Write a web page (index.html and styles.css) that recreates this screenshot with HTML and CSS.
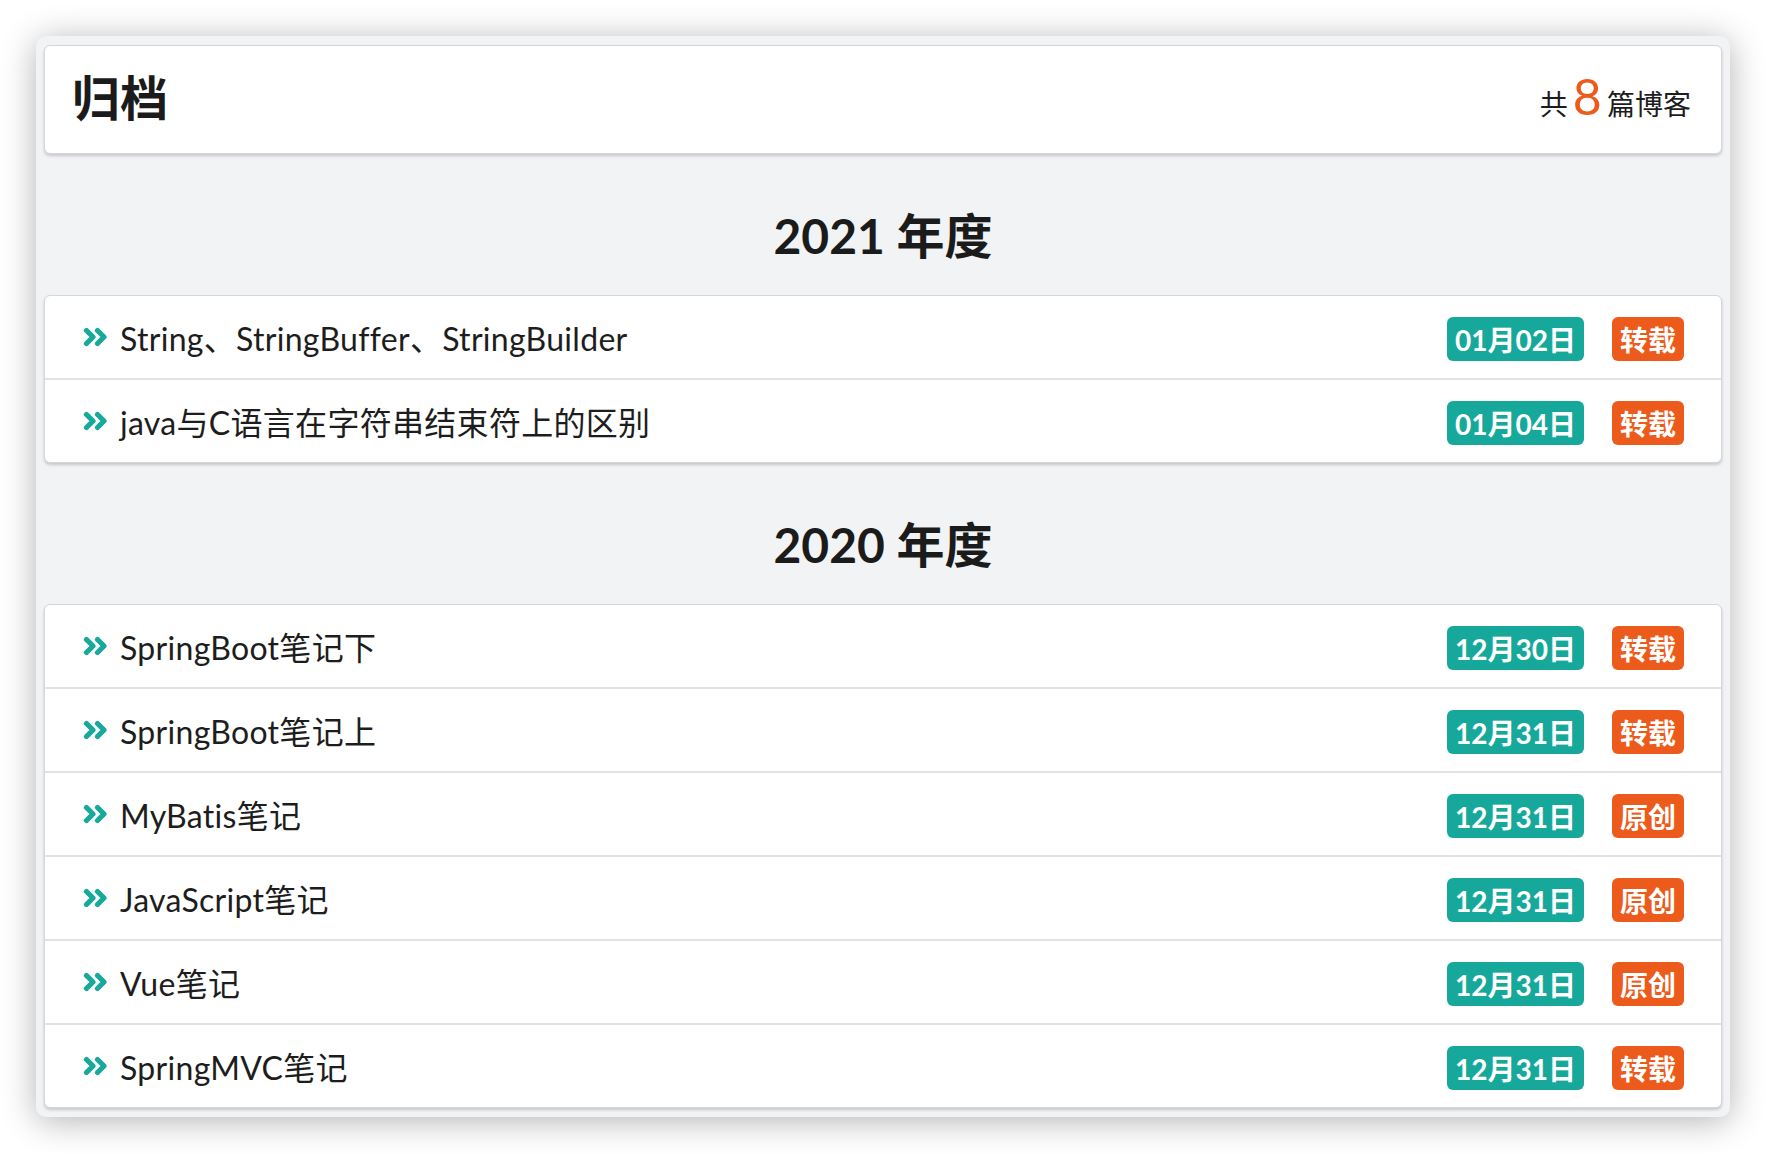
FILE: index.html
```html
<!DOCTYPE html>
<html lang="zh-CN">
<head>
<meta charset="utf-8">
<title>归档</title>
<link rel="stylesheet" href="styles.css">
</head>
<body>
<div class="archive">
  <div class="card header">
    <h2 class="title">归档</h2>
    <div class="count">共 <span class="num">8</span> 篇博客</div>
  </div>

  <h3 class="year">2021 年度</h3>
  <div class="card list">
    <div class="item">
      <svg class="chev" viewBox="0 0 25 20"><path d="M3.5 3.5 L10 10 L3.5 16.5 M14.5 3.5 L21 10 L14.5 16.5"/></svg>
      <span class="item-title">String、StringBuffer、StringBuilder</span>
      <span class="badge date">01月02日</span>
      <span class="badge tag">转载</span>
    </div>
    <div class="item">
      <svg class="chev" viewBox="0 0 25 20"><path d="M3.5 3.5 L10 10 L3.5 16.5 M14.5 3.5 L21 10 L14.5 16.5"/></svg>
      <span class="item-title">java与C语言在字符串结束符上的区别</span>
      <span class="badge date">01月04日</span>
      <span class="badge tag">转载</span>
    </div>
  </div>

  <h3 class="year">2020 年度</h3>
  <div class="card list">
    <div class="item">
      <svg class="chev" viewBox="0 0 25 20"><path d="M3.5 3.5 L10 10 L3.5 16.5 M14.5 3.5 L21 10 L14.5 16.5"/></svg>
      <span class="item-title">SpringBoot笔记下</span>
      <span class="badge date">12月30日</span>
      <span class="badge tag">转载</span>
    </div>
    <div class="item">
      <svg class="chev" viewBox="0 0 25 20"><path d="M3.5 3.5 L10 10 L3.5 16.5 M14.5 3.5 L21 10 L14.5 16.5"/></svg>
      <span class="item-title">SpringBoot笔记上</span>
      <span class="badge date">12月31日</span>
      <span class="badge tag">转载</span>
    </div>
    <div class="item">
      <svg class="chev" viewBox="0 0 25 20"><path d="M3.5 3.5 L10 10 L3.5 16.5 M14.5 3.5 L21 10 L14.5 16.5"/></svg>
      <span class="item-title">MyBatis笔记</span>
      <span class="badge date">12月31日</span>
      <span class="badge tag">原创</span>
    </div>
    <div class="item">
      <svg class="chev" viewBox="0 0 25 20"><path d="M3.5 3.5 L10 10 L3.5 16.5 M14.5 3.5 L21 10 L14.5 16.5"/></svg>
      <span class="item-title">JavaScript笔记</span>
      <span class="badge date">12月31日</span>
      <span class="badge tag">原创</span>
    </div>
    <div class="item">
      <svg class="chev" viewBox="0 0 25 20"><path d="M3.5 3.5 L10 10 L3.5 16.5 M14.5 3.5 L21 10 L14.5 16.5"/></svg>
      <span class="item-title">Vue笔记</span>
      <span class="badge date">12月31日</span>
      <span class="badge tag">原创</span>
    </div>
    <div class="item">
      <svg class="chev" viewBox="0 0 25 20"><path d="M3.5 3.5 L10 10 L3.5 16.5 M14.5 3.5 L21 10 L14.5 16.5"/></svg>
      <span class="item-title">SpringMVC笔记</span>
      <span class="badge date">12月31日</span>
      <span class="badge tag">转载</span>
    </div>
  </div>
</div>
</body>
</html>
```

FILE: styles.css
```css
html, body {
  margin: 0;
  background: #ffffff;
}
body {
  padding: 36px;
  font-family: Lato, "Noto Sans CJK SC", sans-serif;
  color: #1d1d1d;
}
.archive {
  background: #f2f3f5;
  border-radius: 10px;
  padding: 9px 8px;
  box-shadow: 0 4px 34px rgba(0, 0, 0, 0.3);
}
.card {
  background: #ffffff;
  border: 1px solid #d6d6d8;
  border-radius: 6px;
  box-shadow: 0 2px 3px rgba(34, 36, 38, 0.2);
}
.header {
  box-sizing: border-box;
  height: 109px;
  padding: 21px 30px 0 27px;
  display: flex;
  justify-content: space-between;
  align-items: baseline;
}
.title {
  margin: 0;
  font-size: 48px;
  line-height: 60px;
  font-weight: 700;
  color: #1b1b1b;
}
.count {
  font-size: 28px;
  line-height: 60px;
  color: #1d1d1d;
  position: relative;
  top: -1px;
}
.num {
  font-size: 50px;
  margin: 0 -2px;
  color: #ec5b1b;
}
.year {
  margin: 0;
  padding: 53px 0 30px;
  text-align: center;
  font-size: 48px;
  line-height: 58px;
  font-weight: 700;
  color: #1b1b1b;
}
.item {
  height: 82px;
  display: flex;
  align-items: center;
  padding: 0 37px 0 38px;
}
.item + .item {
  border-top: 2px solid #e2e2e3;
}
.chev {
  width: 25px;
  height: 20px;
  flex: none;
  fill: none;
  stroke: #17a99b;
  stroke-width: 5.2;
  stroke-linecap: round;
  stroke-linejoin: round;
}
.item-title {
  flex: 1;
  margin-left: 12px;
  font-size: 32px;
  letter-spacing: 0.3px;
  color: #1d1d1d;
}
.badge {
  display: inline-flex;
  align-items: center;
  height: 44px;
  margin-top: 4px;
  padding: 0 8px;
  border-radius: 6px;
  color: #ffffff;
  font-size: 28px;
  font-weight: 700;
}
.date {
  background: #16a99b;
  margin-right: 28px;
}
.tag {
  background: #ec5b1b;
}
```
